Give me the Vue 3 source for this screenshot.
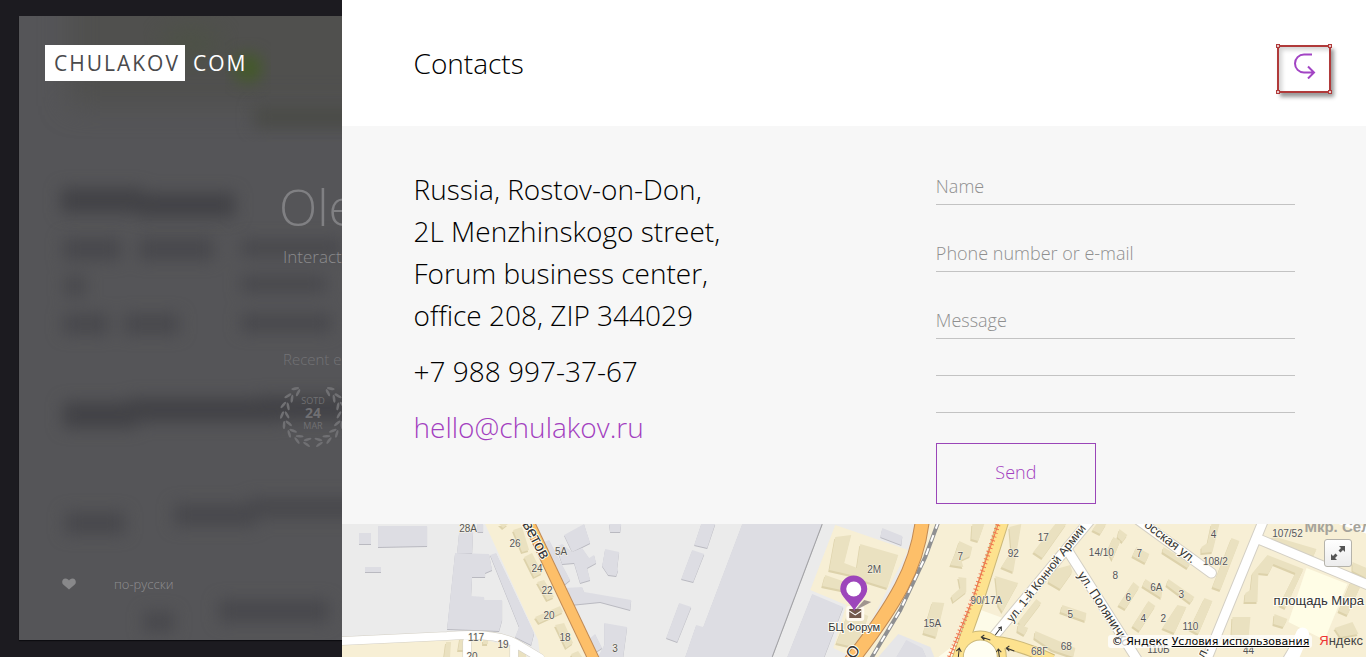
<script setup>
import { ref } from 'vue'

const name = ref('')
const contact = ref('')
const message = ref('')

const address = [
  'Russia, Rostov-on-Don,',
  '2L Menzhinskogo street,',
  'Forum business center,',
  'office 208, ZIP 344029',
]

const leaves = []
for (const side of [-1, 1]) {
  for (let i = 0; i < 8; i++) {
    const deg = 12 + i * 19
    const a = (deg * Math.PI) / 180
    leaves.push(
      { x: 33 + side * 31 * Math.sin(a), y: 33 + 31 * Math.cos(a), r: side * (-deg - 24) },
      { x: 33 + side * 26 * Math.sin(a), y: 33 + 26 * Math.cos(a), r: side * (-deg + 28) },
    )
  }
}

const greyBuildings = [
  '359,533 371,533 371,544 359,544',
  '378,526 427,526 427,546 378,547',
  '365,567 381,567 381,572 365,572',
  '459,533 473,532 472,553 457,553',
  '477,524 483,524 483,532 477,532',
  '455,553 489,554 492,570 485,573 485,577 472,577 471,596 484,597 484,600 502,600 502,620 499,631 447,629',
  '490,555 496,553 509,580 534,633 531,645 515,637 519,627',
  '564,535 584,524 590,543 572,552',
  '572,552 582,548 589,558 594,555 596,563 587,568 590,580 580,583 574,563 562,564 556,547 562,544',
  '544,542 549,540 570,580 564,585',
  '565,588 582,587 584,592 631,600 630,610 600,602 570,605',
  '609,524 621,524 620,532 610,532',
  '605,549 619,552 617,568 618,570 616,576 608,575 602,566',
  '604,623 627,627 623,657 598,657 604,645',
  '595,634 602,648 594,653 588,640',
  '701,524 715,524 707,548 694,545',
  '692,550 704,554 693,582 681,579',
  '679,603 691,607 677,642 666,638',
  '742,524 822,524 772,657 685,657 696,625 703,627',
  '812,594 843,607 824,657 787,657',
  '882,528 902,536 901,545 880,537',
  '906,640 922,648 926,657 896,657',
]

const sandBuildings = [
  '513,530 522,527 529,550 522,552',
  '524,557 532,553 542,573 534,577',
  '537,582 544,580 554,597 547,600',
  '535,617 560,606 563,612 539,623',
  '555,625 564,623 573,643 566,648',
  '499,524 508,524 503,528',
  '571,654 578,651 582,657 572,657',
  '446,642 451,642 450,657 444,657',
  '460,638 465,638 465,650 458,650',
  '483,640 488,640 488,644 483,644',
  '518,650 526,648 526,657 518,657',
  '835,537 851,535 844,563 862,570 860,577 829,570',
  '825,575 848,583 846,591 822,586',
  '860,544 898,555 887,588 855,578',
  '850,608 868,616 858,648 836,643',
  '972,524 984,524 978,541 971,539',
  '959,541 972,547 970,556 961,560 963,567 950,565 955,553',
  '958,577 966,578 966,592 953,602 951,596 960,588',
  '932,602 944,603 936,637 923,633',
  '1009,527 1021,524 1013,572 1001,567 1011,551',
  '1055,524 1066,524 1042,558 1033,552',
  '995,576 1018,583 1002,612 998,605',
  '1052,570 1070,565 1072,572 1060,589 1048,582',
  '1036,599 1041,603 1022,628 1018,622',
  '1062,605 1086,613 1085,621 1060,612',
  '1018,624 1028,628 1024,635 1017,631',
  '1035,631 1075,648 1073,657 1052,650 1034,638',
  '1096,524 1106,524 1100,534 1092,530',
  '1119,529 1127,535 1122,542 1117,537',
  '1107,550 1113,537 1120,541 1112,560',
  '1136,547 1149,554 1145,563 1132,556',
  '1163,547 1190,563 1187,568 1162,552',
  '1211,524 1219,524 1212,552 1201,553 1201,547 1207,543',
  '1231,538 1239,541 1220,590 1212,587',
  '1267,555 1303,569 1285,608 1279,605 1295,573 1273,564 1268,574 1258,573 1257,602 1244,602 1245,593 1250,590 1252,573',
  '1272,536 1316,549 1313,556 1272,543',
  '1133,582 1139,587 1125,609 1118,605',
  '1145,579 1162,590 1161,598 1142,586',
  '1168,579 1194,597 1190,603 1166,585',
  '1148,601 1155,606 1139,631 1132,626',
  '1177,605 1186,607 1174,633 1162,628',
  '1204,598 1212,601 1198,634 1189,629',
  '1232,617 1250,617 1248,639 1231,635',
  '1274,614 1287,619 1283,627 1273,624',
  '1350,582 1360,586 1347,615 1338,611',
  '1352,562 1366,568 1366,578 1352,571',
  '1334,628 1352,622 1358,634 1340,637',
]

const numbers = [
  ['28A', 468, 532], ['26', 515, 547], ['24', 537, 572], ['5A', 561, 555],
  ['22', 547, 594], ['20', 549, 619], ['18', 565, 641], ['117', 476, 641],
  ['19', 503, 648], ['3', 615, 652], ['2М', 874, 573], ['7', 960, 560],
  ['92', 1013, 557], ['17', 1043, 541], ['14/10', 1101, 556], ['90/17А', 986, 604],
  ['15А', 932, 627], ['5', 1070, 618], ['68', 1066, 650], ['68Г', 1039, 655],
  ['4', 1213, 538], ['107/52', 1287, 537], ['7', 1139, 557], ['8', 1115, 579],
  ['108/2', 1215, 565], ['6А', 1156, 591], ['6', 1128, 601], ['3', 1181, 598],
  ['4', 1143, 622], ['2', 1163, 622], ['110', 1190, 630], ['110Б', 1158, 653],
  ['44', 1248, 654], ['20', 472, 660],
]
</script>

<template>
  <div class="page">
    <aside class="side">
      <div class="card">
        <svg class="haze" viewBox="0 0 323 624" preserveAspectRatio="xMinYMin slice" aria-hidden="true">
          <defs>
            <filter id="soft" x="-30%" y="-60%" width="160%" height="220%" color-interpolation-filters="sRGB"><feGaussianBlur stdDeviation="8" /></filter>
            <filter id="softer" x="-30%" y="-60%" width="160%" height="220%" color-interpolation-filters="sRGB"><feGaussianBlur stdDeviation="14" /></filter>
          </defs>
          <rect x="50" y="-50" width="360" height="140" fill="#50504e" filter="url(#softer)" />
          <ellipse cx="172" cy="28" rx="30" ry="14" fill="#4c5244" filter="url(#softer)" />
          <circle cx="229" cy="52" r="14" fill="#435a28" filter="url(#soft)" />
          <rect x="235" y="90" width="110" height="22" fill="#4a4b47" filter="url(#soft)" />
          <g fill="#424246" filter="url(#soft)">
            <rect x="42" y="172" width="82" height="25" />
            <rect x="118" y="177" width="98" height="24" />
            <rect x="44" y="386" width="74" height="26" />
            <rect x="110" y="382" width="152" height="24" />
            <rect x="240" y="380" width="90" height="24" />
          </g>
          <g fill="#48484c" filter="url(#soft)">
            <rect x="44" y="222" width="58" height="22" />
            <rect x="120" y="222" width="75" height="22" />
            <rect x="222" y="224" width="100" height="16" />
            <rect x="46" y="260" width="20" height="20" />
            <rect x="222" y="260" width="85" height="16" />
            <rect x="44" y="298" width="46" height="20" />
            <rect x="105" y="298" width="55" height="20" />
            <rect x="222" y="298" width="90" height="18" />
            <rect x="46" y="496" width="60" height="22" />
            <rect x="155" y="488" width="82" height="22" />
            <rect x="230" y="482" width="110" height="20" />
            <rect x="125" y="596" width="30" height="20" />
            <rect x="200" y="584" width="110" height="22" />
          </g>
        </svg>
        <a class="logo" href="#"><span class="logo-box">CHULAKOV</span><span>COM</span></a>
        <div class="hero">
          <h1>Ole</h1>
          <p class="role">Interact</p>
          <p class="recent">Recent e</p>
          <svg class="laurel" viewBox="0 0 66 66" role="img" aria-label="SOTD 24 MAR">
            <ellipse v-for="(l, i) in leaves" :key="i" rx="4" ry="1.3" :transform="`translate(${l.x} ${l.y}) rotate(${l.r})`" />
            <text x="33" y="23" font-size="9">SOTD</text>
            <text x="33" y="37" font-size="14" font-weight="700">24</text>
            <text x="33" y="48" font-size="9">MAR</text>
          </svg>
        </div>
        <div class="side-foot">
          <svg class="heart" viewBox="0 0 14 12" aria-hidden="true"><path d="M7 11.500 1.200 6.600C-.8 4.400.2.500 3.500.500 5.200.500 6.500 1.600 7 2.500 7.500 1.600 8.800.500 10.500.500c3.300 0 4.300 3.900 2.300 6.100Z" /></svg>
          <a href="#">по-русски</a>
        </div>
      </div>
    </aside>

    <main class="panel">
      <header class="head">
        <h2>Contacts</h2>
        <button class="back" type="button" aria-label="Back">
          <svg viewBox="0 0 26 28" aria-hidden="true"><path d="M21 3.500H13A9 9 0 0 0 13 21.500H22.500M17 15.500 23 21.500 17 27.500" /></svg>
          <i class="h tl"></i><i class="h tr"></i><i class="h bl"></i><i class="h br"></i>
        </button>
      </header>

      <section class="body">
        <div class="info">
          <address><span v-for="line in address" :key="line">{{ line }}</span></address>
          <p>+7 988 997-37-67</p>
          <p><a href="mailto:hello@chulakov.ru">hello@chulakov.ru</a></p>
        </div>
        <form @submit.prevent>
          <input v-model="name" type="text" placeholder="Name" aria-label="Name" />
          <input v-model="contact" type="text" placeholder="Phone number or e-mail" aria-label="Phone number or e-mail" />
          <textarea v-model="message" rows="3" placeholder="Message" aria-label="Message"></textarea>
          <button class="send" type="submit">Send</button>
        </form>
      </section>

      <section class="map" aria-label="Map">
        <svg class="map-art" viewBox="342 524 1024 133" preserveAspectRatio="xMidYMid slice">
          <rect x="300" y="500" width="1100" height="200" fill="#ebebeb" />
          <g fill="#f7efd5">
            <path d="M485 524H528L592 657H540L538 640Z" />
            <path d="M342 645 465 639Q500 638 528 657H342Z" />
            <path d="M835 525 908 550 852 657 833 648 846 605 810 590Z" />
            <path d="M921 524H1366V657H853L901 587Z" />
          </g>
          <path d="M898 634 930 647 934 657H878Z" fill="#e6e6e8" />
          <path d="M975 608 1008 620 990 640H960L938 657H958Z" fill="#fdfbe8" />
          <path d="M1306 568 1347 584 1324 640 1288 622Z" fill="#fffde6" />
          <g class="grey-shade"><polygon v-for="p in greyBuildings" :key="p" :points="p" transform="translate(0 1)" /></g>
          <g class="grey"><polygon v-for="p in greyBuildings" :key="p" :points="p" /></g>
          <g class="sand-shade"><polygon v-for="p in sandBuildings" :key="p" :points="p" transform="translate(-1 2)" /></g>
          <g class="sand"><polygon v-for="p in sandBuildings" :key="p" :points="p" /></g>
          <path d="M822 524 772 657" stroke="#a3a3a6" fill="none" />

          <g fill="none" stroke="#d3cfc4" stroke-linecap="round">
            <path d="M340 641 447 636Q494 632 515 643L540 658M467 642V660M514 645V660" stroke-width="9" />
            <path d="M992 638 1090 520M1067 550 1137 660M1138 520 1211 573M1264 518 1206 660M1258 539 1370 586M1302 635 1287 660" stroke-width="11" />
          </g>
          <g fill="none" stroke="#fff" stroke-linecap="round">
            <path d="M340 641 447 636Q494 632 515 643L540 658M467 642V660M514 645V660" stroke-width="8" />
            <path d="M992 638 1090 520M1067 550 1137 660M1138 520 1211 573M1264 518 1206 660M1258 539 1370 586M1302 635 1287 660" stroke-width="9" />
            <path d="M1330 518 1370 532" stroke-width="6" />
          </g>
          <path d="M1302 634 1292 657" stroke="#fff" stroke-width="13" stroke-linecap="round" />

          <path d="M938 522 925 557 900 610 870 660" fill="none" stroke="#8f9092" stroke-width="4" />
          <path d="M938 522 925 557 900 610 870 660" fill="none" stroke="#fff" stroke-width="2" stroke-dasharray="7 7" />

          <g fill="none" stroke="#c08a55"><path d="M528 521 594 660" stroke-width="12" /><path d="M922 521Q918 555 901 587T850 662" stroke-width="15" /></g>
          <g fill="none" stroke="#fdbf69"><path d="M528 521 594 660" stroke-width="10" /><path d="M922 521Q918 555 901 587T850 662" stroke-width="13" /></g>

          <g fill="none" stroke="#ccb878"><path d="M1003 521 977 603 957 660M985 642Q1010 640 1052 660" stroke-width="12" /><circle cx="980" cy="657" r="21" stroke-width="11" /></g>
          <g fill="none" stroke="#fde28e"><path d="M1003 521 977 603 957 660M985 642Q1010 640 1052 660" stroke-width="10" /><circle cx="980" cy="657" r="21" stroke-width="9" /></g>
          <circle cx="980" cy="657" r="17" fill="#fffef2" stroke="#ccb878" />
          <path d="M999 521 972 600 948 660" fill="none" stroke="#f0764f" stroke-width="1" />
          <path d="M999 521 972 600 948 660" fill="none" stroke="#f0764f" stroke-width="5" stroke-dasharray="1 3" />
          <g fill="none" stroke="#333" stroke-width="1">
            <path d="M995 635 1001 627M998 628 1001 627 1001 631M990 640 981 637M984 635 981 637 984 640M1014 651 1006 648M1009 646 1006 648 1009 651M958 657 959 648M956 651 959 648 961 652M999 657 998 649M996 652 998 649 1001 652" />
          </g>

          <g class="num"><text v-for="n in numbers" :key="n[0] + n[1]" :x="n[1]" :y="n[2]">{{ n[0] }}</text></g>
          <g class="street">
            <text transform="translate(522 524) rotate(62)" font-size="16">ветов</text>
            <text class="long" transform="translate(1012 623) rotate(-52)">ул. 1-й Конной Армии</text>
            <text transform="translate(1077 575) rotate(57)">ул. Поляничко</text>
            <text transform="translate(1143 526) rotate(38)">осская ул.</text>
            <text transform="translate(853 660) rotate(-52)" font-size="16">О</text>
            <text transform="translate(1204 659) rotate(-66)">л.</text>
            <text x="1273" y="605">площадь Мира</text>
          </g>
          <text class="district" x="1304" y="532">Мкр. Сел</text>

          <rect x="846" y="606" width="18" height="15" rx="3" fill="#fffaf0" />
          <rect x="849" y="609" width="12" height="9" fill="#735a4c" />
          <path d="M849 611 855 615 861 611" fill="none" stroke="#fff" />
          <text class="poi" x="854" y="631">БЦ Форум</text>
          <path d="M854 611 864 600 871 602Z" fill="#5a4a55" opacity=".55" />
          <path d="M854 611C850 602 840 597 840 589A13.500 13.500 0 0 1 867 589C867 597 858 602 854 611Z" fill="#9d45bb" />
          <circle cx="853.500" cy="589" r="7.500" fill="#fff" />
        </svg>
        <button class="expand" type="button" aria-label="Expand map">
          <svg viewBox="0 0 16 16" aria-hidden="true"><path d="M9 1H15V7L13 5 10.500 7.500 8.500 5.500 11 3ZM7 15H1V9L3 11 5.500 8.500 7.500 10.500 5 13Z" /></svg>
        </button>
        <div class="credits">
          <span class="copy">© Яндекс <a href="#">Условия использования</a></span>
          <a class="yandex" href="#"><b>Я</b>ндекс</a>
        </div>
      </section>
    </main>
  </div>
</template>

<style>
body {
  margin: 0;
}
</style>

<style scoped>
.page {
  display: grid;
  grid-template-columns: minmax(0, 1fr) minmax(0, 3fr);
  min-height: 100vh;
  background: #1c1b20;
  font-family: "Open Sans", "Noto Sans", sans-serif;
  font-weight: 300;
}
h1, h2, p, address {
  margin: 0;
  font-weight: 300;
  font-style: normal;
}
a {
  color: inherit;
  text-decoration: none;
}
.side {
  display: flex;
  overflow: hidden;
}
.card {
  position: relative;
  flex: 1;
  min-width: 0;
  display: flex;
  flex-direction: column;
  margin: 16px 0 17px 19px;
  background: #555558;
  box-shadow: 0 1px 1px #0c0c10;
  white-space: nowrap;
}
.haze {
  position: absolute;
  inset: 0;
  width: 100%;
  height: 100%;
}
.logo {
  position: relative;
  display: flex;
  gap: 8px;
  margin: 29px 0 0 26px;
  color: #fff;
  font-size: 21px;
  line-height: 36px;
  font-weight: 400;
  letter-spacing: 2px;
}
.logo-box {
  padding: 0 5px 0 9px;
  background: #fff;
  color: #4a4a4c;
}
.hero {
  position: relative;
  margin: 92px 0 0 260px;
  color: #808083;
}
.hero h1 {
  font-size: 50px;
  line-height: 68px;
}
.role {
  margin: 4px 0 0 4px;
  font-size: 17px;
  line-height: 24px;
  color: #8b8b8d;
}
.recent {
  margin: 80px 0 0 4px;
  font-size: 15px;
  line-height: 20px;
  color: #737376;
}
.laurel {
  display: block;
  width: 66px;
  height: 66px;
  margin: 12px 0 0 1px;
  fill: #707073;
  text-anchor: middle;
  font-weight: 400;
}
.side-foot {
  position: relative;
  display: flex;
  align-items: center;
  gap: 38px;
  margin: auto 0 46px 43px;
  font-size: 13px;
  line-height: 20px;
  color: #8f8f91;
}
.heart {
  width: 14px;
  height: 12px;
  fill: #88888a;
}
.panel {
  display: flex;
  flex-direction: column;
  background: #f7f7f7;
  color: #000;
}
.head {
  display: flex;
  align-items: center;
  justify-content: space-between;
  min-height: 126px;
  padding: 0 35px 0 72px;
  background: #fff;
}
.head h2 {
  font-size: 28px;
  line-height: 42px;
}
.back {
  position: relative;
  display: flex;
  align-items: flex-start;
  justify-content: center;
  align-self: flex-start;
  width: 54px;
  height: 48px;
  margin-top: 45px;
  padding: 4px 0 0;
  border: 2px solid #b03a3a;
  background: #fff;
  box-shadow: 3px 4px 4px #999, inset 3px 3px 4px #d4d4d4;
}
.back svg {
  width: 26px;
  height: 28px;
  fill: none;
  stroke: #a244c4;
  stroke-width: 2;
}
.h {
  position: absolute;
  width: 2px;
  height: 2px;
  border: 1px solid #b03a3a;
  background: #e8caca;
}
.tl { left: -3px; top: -3px; }
.tr { right: -3px; top: -3px; }
.bl { left: -3px; bottom: -3px; }
.br { right: -3px; bottom: -3px; }
.body {
  display: grid;
  grid-template-columns: 16fr 11fr;
  padding: 42px 71px 20px 72px;
}
.info {
  font-size: 28px;
  line-height: 42px;
}
.info span {
  display: block;
}
.info p {
  margin-top: 14px;
}
.info a {
  color: #a33fc0;
}
form {
  display: flex;
  flex-direction: column;
  gap: 30px;
}
input, textarea {
  box-sizing: border-box;
  width: 100%;
  height: 37px;
  margin: 0;
  padding: 0;
  border: 0;
  border-radius: 0;
  outline: 0;
  background: transparent;
  border-bottom: 1px solid #c3c3c3;
  font: 300 18px/36px "Open Sans", sans-serif;
}
textarea {
  height: 111px;
  border: 0;
  resize: none;
  overflow: hidden;
  line-height: 37px;
  background: repeating-linear-gradient(#f7f7f7 0 36px, #c3c3c3 36px 37px);
}
input::placeholder, textarea::placeholder {
  color: #8f8f8f;
  opacity: 1;
}
.send {
  align-self: flex-start;
  width: 160px;
  height: 61px;
  padding: 0 0 4px;
  border: 1px solid #9a46b8;
  background: transparent;
  color: #a33fc0;
  font: 300 18px/24px "Open Sans", sans-serif;
}
.map {
  position: relative;
  flex: 1;
  min-height: 133px;
  overflow: hidden;
}
.map-art {
  position: absolute;
  inset: 0;
  width: 100%;
  height: 100%;
  font-family: "Liberation Sans", sans-serif;
  font-weight: 400;
}
.grey { fill: #dddde3; }
.grey-shade { fill: #b9b9c0; }
.sand { fill: #eae1c0; }
.sand-shade { fill: #ddd2ab; }
.num {
  font-size: 10px;
  text-anchor: middle;
  fill: #555;
  stroke: #f8f4e6;
  stroke-width: 1px;
  paint-order: stroke;
}
.street, .poi {
  font-size: 13px;
  fill: #333;
  stroke: #fffdf4;
  stroke-width: 2px;
  paint-order: stroke;
}
.long {
  font-size: 12px;
}
.poi {
  font-size: 11px;
  text-anchor: middle;
}
.district {
  font-size: 15px;
  font-weight: 700;
  fill: #a5a39b;
}
.expand {
  position: absolute;
  top: 15px;
  right: 14px;
  display: grid;
  place-items: center;
  width: 28px;
  height: 28px;
  padding: 0;
  border: 1px solid #b5b3ab;
  border-radius: 3px;
  background: linear-gradient(#fff, #ececec);
}
.expand svg {
  width: 16px;
  height: 16px;
  fill: #555;
}
.credits {
  position: absolute;
  right: 3px;
  bottom: 6px;
  display: flex;
  align-items: center;
  gap: 7px;
  font-weight: 400;
}
.copy {
  padding: 0 3px 0 4px;
  border-radius: 3px;
  background: rgba(255, 255, 255, 0.75);
  font: 11px/13px "DejaVu Sans", sans-serif;
}
.copy a {
  text-decoration: underline;
}
.yandex {
  font: 13px/20px "Liberation Sans", sans-serif;
  color: #444;
}
.yandex b {
  color: #e33;
  font-weight: 400;
}
</style>
